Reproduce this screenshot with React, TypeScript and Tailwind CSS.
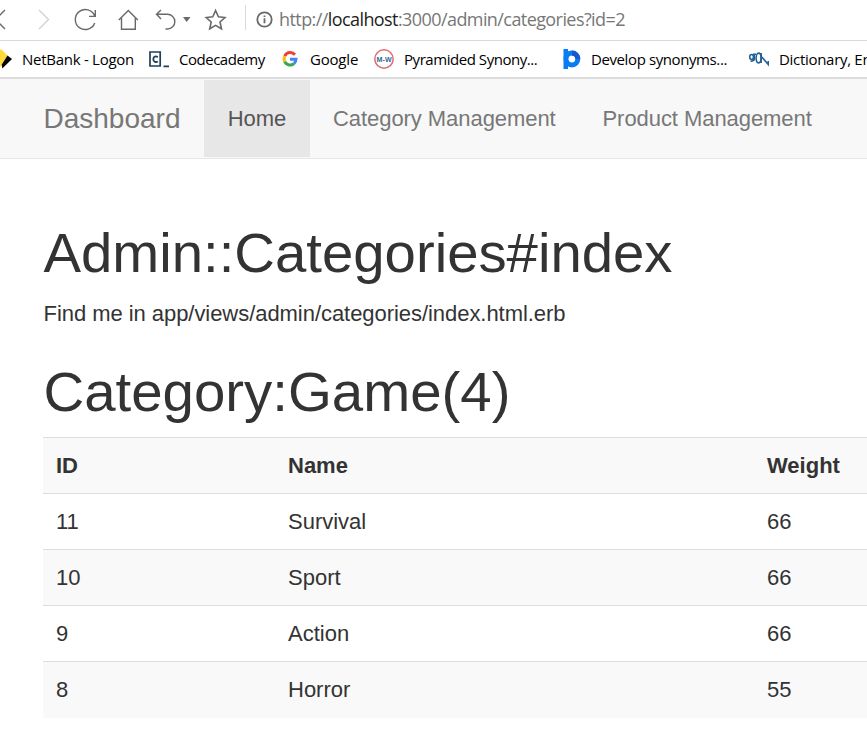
import type { ReactNode } from "react";

const ui = "font-['Open_Sans','Noto_Sans',sans-serif]";

function NetBankIcon() {
  return (
    <svg width="20" height="20" viewBox="0 0 20 20">
      <path d="M0 10 9 0 15.5 6.5 9 18Z" fill="#ffd93b" />
      <path d="M15.5 6.5 20 10 10.3 19.5 9.8 15.5Z" fill="#000" />
    </svg>
  );
}

function CodecademyIcon() {
  return (
    <svg width="20" height="20" viewBox="0 0 20 20">
      <path d="M1 3H11.2V17H1Z M14.5 17.3H20" fill="none" stroke="#204056" strokeWidth="1.7" />
      <path d="M8.8 8.2C7 6.8 4.3 7.4 4.3 10.2S7 13.6 8.8 12.4" fill="none" stroke="#204056" strokeWidth="1.8" />
    </svg>
  );
}

function GoogleIcon() {
  return (
    <svg width="20" height="20" viewBox="0 0 20 20" fill="none" strokeWidth="3">
      <path d="M14.9 5.8A6 6 0 0 0 4.7 7.2" stroke="#ea4335" />
      <path d="M4.7 7.2A6.2 6.2 0 0 0 4.7 12.8" stroke="#fbbc05" />
      <path d="M4.7 12.8A6 6 0 0 0 14 14.6" stroke="#34a853" />
      <path d="M14 14.6A6 6 0 0 0 16 10.2H10" stroke="#4285f4" />
    </svg>
  );
}

function MerriamIcon() {
  return (
    <svg width="20" height="20" viewBox="0 0 20 20">
      <circle cx="10" cy="10" r="9.2" fill="#fff" stroke="#e26b70" strokeWidth="1.5" />
      <text x="2.6" y="12.7" fontSize="7.6" fontWeight="700" textLength="15" lengthAdjust="spacingAndGlyphs" fill="#356796" fontFamily="Liberation Sans">M-W</text>
    </svg>
  );
}

function SynonymsIcon() {
  return (
    <svg width="20" height="20" viewBox="0 0 20 20">
      <path d="M2.5 0H7V20H2.5Z" fill="#087cf5" />
      <circle cx="10.9" cy="10" r="5.9" fill="#fff" stroke="#087cf5" strokeWidth="5" />
      <path d="M10.9 1.6A8.4 8.4 0 0 1 19.3 10H14.2A3.3 3.3 0 0 0 10.9 6.7Z" fill="#1658d0" />
    </svg>
  );
}

function DictionaryIcon() {
  return (
    <svg width="20" height="20" viewBox="0 0 20 20" fill="none" stroke="#236096" strokeWidth="1.6">
      <ellipse cx="2.6" cy="8" rx="1.9" ry="2.5" />
      <path d="M4 5.2H7M5.2 5.5V10.5Q4.8 12 1.5 12.2" />
      <ellipse cx="9.6" cy="9" rx="2.5" ry="4.9" />
      <path d="M12.2 4V14M12.8 8 19.3 15.5V12" />
    </svg>
  );
}

function Bookmark({ icon, width, text, children }: { icon: ReactNode; width: string; text: string; children: string }) {
  return (
    <div className={`flex shrink-0 items-center gap-[10px] whitespace-nowrap ${width}`}>
      <span className="h-5 w-5 shrink-0">{icon}</span>
      <span className={text}>{children}</span>
    </div>
  );
}

function Toolbar() {
  return (
    <div className={`flex h-[41px] items-center border-b border-[#d9d9d9] ${ui}`}>
      <svg className="shrink-0" width="246" height="40" viewBox="0 0 246 40" fill="none" stroke="#696969" strokeWidth="1.4">
        <path d="M5 10-4.5 19.5 5 29" />
        <path d="M39 10 48.5 19.5 39 29" stroke="#d2d2d2" />
        <path d="M94.6 15.8A10 10 0 1 0 94.7 23M95.3 10V16.4H89" />
        <path d="M118.8 20 128.3 10.5 137.8 20M121.5 18V29.2H135.3V18" />
        <path d="M161 10 156.5 14.3 161 19M157 14.3H167.5A7.2 7.2 0 0 1 167.5 29H165.5" />
        <path d="M183 17H190.5L186.7 22Z" fill="#696969" stroke="none" />
        <path d="M215.6 10.5 218.4 16.8 225 17.5 220 22 221.5 28.8 215.6 25.4 209.7 28.8 211.2 22 206.2 17.5 212.8 16.8Z" strokeWidth="1.6" />
        <path d="M245.5 5V30" stroke="#d9d9d9" strokeWidth="1" />
      </svg>
      <svg className="mb-px ml-[10px] shrink-0" width="17" height="17" viewBox="0 0 17 17" fill="none" stroke="#696969" strokeWidth="1.8">
        <circle cx="8.5" cy="8.5" r="7.2" />
        <path d="M8.5 7.3V12.2M8.5 4.5V6.1" />
      </svg>
      <div className="mb-[2px] ml-[6px] text-[18px] leading-6 tracking-[-0.58px] whitespace-nowrap text-[#777]">
        http://<span className="text-[#222]">localhost</span>:3000/admin/categories?id=2
      </div>
    </div>
  );
}

function Bookmarks() {
  return (
    <div className={`flex h-[38px] items-center overflow-hidden border-b-2 border-[#dcdcdc] pb-px text-[15px] leading-5 text-black ${ui}`}>
      <div className="-ml-2 flex">
        <Bookmark icon={<NetBankIcon />} width="w-[157px]" text="tracking-[-0.27px]">NetBank - Logon</Bookmark>
        <Bookmark icon={<CodecademyIcon />} width="w-[131px]" text="tracking-[-0.48px]">Codecademy</Bookmark>
        <Bookmark icon={<GoogleIcon />} width="w-[94px]" text="tracking-[-0.2px]">Google</Bookmark>
        <Bookmark icon={<MerriamIcon />} width="w-[187px]" text="tracking-[-0.45px]">Pyramided Synony...</Bookmark>
        <Bookmark icon={<SynonymsIcon />} width="w-[188px]" text="tracking-[-0.4px]">Develop synonyms...</Bookmark>
        <Bookmark icon={<DictionaryIcon />} width="w-[220px]" text="tracking-[-0.3px]">Dictionary, En</Bookmark>
      </div>
    </div>
  );
}

const rows = [
  ["11", "Survival", "66"],
  ["10", "Sport", "66"],
  ["9", "Action", "66"],
  ["8", "Horror", "55"],
];

export default function App() {
  return (
    <div className="h-[737px] w-[867px] overflow-hidden bg-white font-['Liberation_Sans',Arial,sans-serif] text-[22px] text-[#333]">
      <Toolbar />
      <Bookmarks />
      <nav className="flex h-20 items-center border-b border-[#e7e7e7] bg-[#f8f8f8] whitespace-nowrap text-[#777]">
        <a className="ml-[43.5px] w-[160.5px] text-[28px]">Dashboard</a>
        <a className="flex h-[77px] w-[106px] items-center justify-center bg-[#e7e7e7] text-[#555]">Home</a>
        <a className="ml-[23px] w-[269.5px] tracking-[-0.06px]">Category Management</a>
        <a className="tracking-[-0.06px]">Product Management</a>
      </nav>
      <main className="ml-[43px]">
        <h1 className="pt-[63px] pl-[0.5px] text-[56.3px] leading-[62px]">Admin::Categories#index</h1>
        <p className="mt-[14px] pl-[0.5px] leading-8 tracking-[-0.05px]">Find me in app/views/admin/categories/index.html.erb</p>
        <h1 className="mt-[31px] mb-[14px] pl-[0.5px] text-[56.4px] leading-[62px]">Category:Game(4)</h1>
        <table className="w-[1050px] table-fixed border-collapse text-left">
          <colgroup>
            <col className="w-[232px]" />
            <col className="w-[479px]" />
            <col />
          </colgroup>
          <tbody>
            <tr className="h-14 border-t border-[#ddd] bg-[#f9f9f9]">
              <th className="px-[13px]">ID</th>
              <th className="px-[13px]">Name</th>
              <th className="px-[13px]">Weight</th>
            </tr>
            {rows.map((row, i) => (
              <tr key={row[0]} className={`h-14 border-t border-[#ddd] ${i % 2 ? "bg-[#f9f9f9]" : "bg-white"}`}>
                {row.map((cell, j) => (
                  <td key={j} className="px-[13px]">{cell}</td>
                ))}
              </tr>
            ))}
          </tbody>
        </table>
      </main>
    </div>
  );
}
